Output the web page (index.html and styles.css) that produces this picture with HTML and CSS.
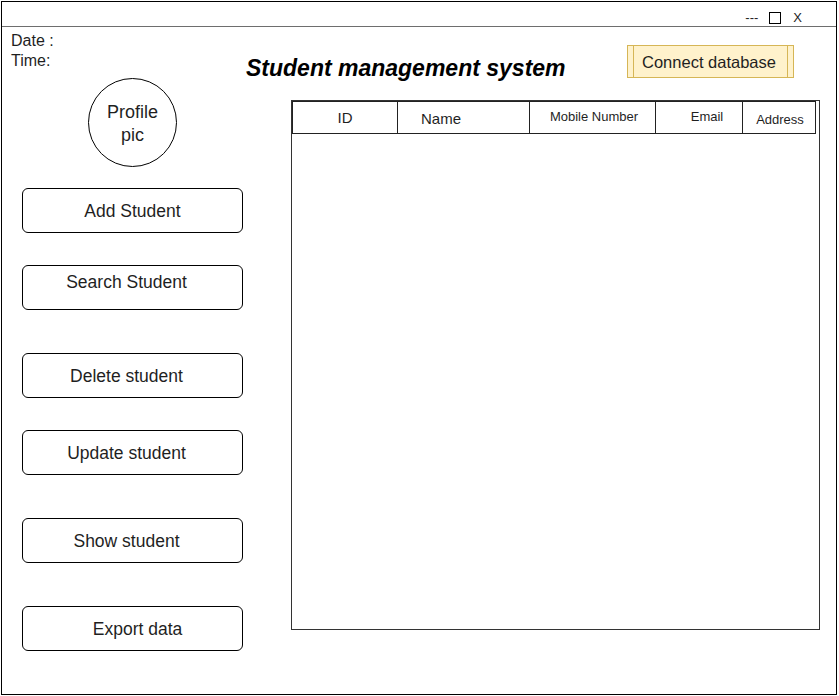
FILE: index.html
```html
<!DOCTYPE html>
<html lang="en">
<head>
<meta charset="utf-8">
<title>Student management system</title>
<link rel="stylesheet" href="styles.css">
</head>
<body>
<div class="window">
  <div class="titlebar">
    <span class="ctl-min">---</span>
    <span class="ctl-max"></span>
    <span class="ctl-close">X</span>
  </div>
  <div class="content">
    <aside class="sidebar">
      <div class="datetime">
        <div>Date :</div>
        <div>Time:</div>
      </div>
      <div class="avatar"><span>Profile<br>pic</span></div>
      <div class="btn btn-first">Add Student</div>
      <div class="btn gap-s shift-ul">Search Student</div>
      <div class="btn gap-l shift-l">Delete student</div>
      <div class="btn gap-s shift-l">Update student</div>
      <div class="btn gap-l shift-l">Show student</div>
      <div class="btn gap-l shift-r">Export data</div>
    </aside>
    <main class="main">
      <div class="topbar">
        <h1 class="title">Student management system</h1>
        <div class="connect"><span class="connect-inner">Connect database</span></div>
      </div>
      <div class="grid">
        <div class="grid-head">
          <div class="cell c-id">ID</div>
          <div class="cell c-name">Name</div>
          <div class="cell c-mobile">Mobile Number</div>
          <div class="cell c-email">Email</div>
          <div class="cell c-address">Address</div>
        </div>
      </div>
    </main>
  </div>
</div>
</body>
</html>
```
FILE: styles.css
```css
* { box-sizing: border-box; }
html, body { margin: 0; padding: 0; background: #fff; }
body {
  font-family: "Liberation Sans", Arial, Helvetica, sans-serif;
  color: #1f1f1f;
}
.window {
  margin: 1px 0 0 1px;
  width: 836px;
  height: 694px;
  border: 1px solid #000;
  display: flex;
  flex-direction: column;
}
.titlebar {
  height: 25px;
  border-bottom: 1px solid #6e6e6e;
  display: flex;
  justify-content: flex-end;
  align-items: center;
  padding: 7px 34px 0 0;
  font-size: 13px;
  line-height: 14px;
}
.ctl-max {
  width: 12px;
  height: 12px;
  border: 1px solid #000;
  margin-left: 11px;
}
.ctl-close { margin-left: 12px; }
.content {
  flex: 1;
  display: flex;
}
.sidebar {
  width: 243px;
  display: flex;
  flex-direction: column;
  align-items: flex-start;
}
.datetime {
  padding: 4px 0 0 9px;
  font-size: 16px;
  line-height: 20px;
}
.avatar {
  margin: 7px 0 0 86px;
  width: 89px;
  height: 89px;
  border: 1px solid #000;
  border-radius: 50%;
  display: flex;
  align-items: center;
  justify-content: center;
  text-align: center;
  padding-top: 2px;
  font-size: 18px;
  line-height: 23px;
}
.btn {
  margin-left: 20px;
  width: 221px;
  height: 45px;
  border: 1px solid #000;
  border-radius: 6px;
  display: flex;
  align-items: center;
  justify-content: center;
  padding-top: 2px;
  font-size: 17.5px;
}
.btn-first { margin-top: 21px; }
.gap-s { margin-top: 32px; }
.gap-l { margin-top: 43px; }
.shift-ul { padding: 0 12px 10px 0; }
.shift-l { padding-right: 12px; }
.shift-r { padding-left: 10px; }
.main {
  flex: 1;
  display: flex;
  flex-direction: column;
}
.topbar {
  height: 73px;
  display: flex;
  align-items: flex-start;
}
.title {
  margin: 27px 0 0 1px;
  font-size: 23px;
  line-height: 28px;
  font-weight: bold;
  font-style: italic;
  color: #000;
}
.connect {
  margin: 18px 42px 0 auto;
  width: 167px;
  height: 33px;
  padding: 0 5px;
  background: #fff2cc;
  border: 1px solid #d6b656;
  display: flex;
}
.connect-inner {
  flex: 1;
  border-left: 1px solid #d6b656;
  border-right: 1px solid #d6b656;
  display: flex;
  align-items: center;
  justify-content: center;
  padding: 2px 3px 0 0;
  font-size: 16.5px;
}
.grid {
  margin-left: 46px;
  width: 529px;
  height: 530px;
  border: 1px solid #333;
}
.grid-head {
  display: flex;
}
.cell {
  height: 33px;
  border: 1px solid #222;
  display: flex;
  align-items: center;
  justify-content: center;
  font-size: 13px;
}
.cell + .cell { margin-left: -1px; }
.c-id { width: 106px; font-size: 15px; }
.c-name { width: 133px; font-size: 15px; justify-content: flex-start; padding: 2px 0 0 23px; }
.c-mobile { width: 127px; padding: 0 0 3px 3px; }
.c-email { width: 88px; padding: 0 0 3px 16px; }
.c-address { width: 74px; padding: 3px 0 0 2px; }
```
